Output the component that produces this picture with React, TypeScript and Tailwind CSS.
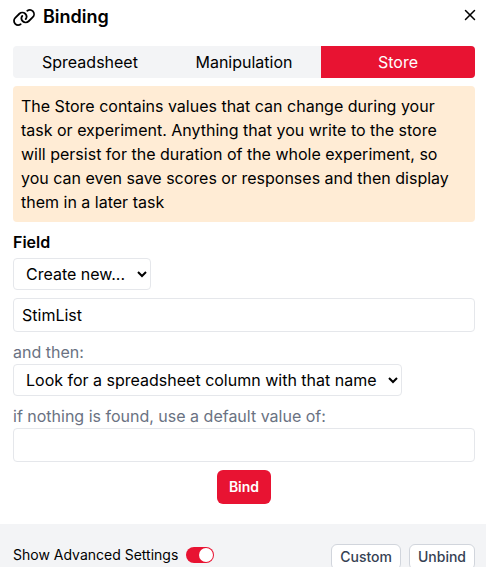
import React, { useState } from 'react';
import { X } from 'lucide-react';
import clsx from 'clsx';

const TABS = ['Spreadsheet', 'Manipulation', 'Store'];

const LinkIcon = () => (
  <svg
    viewBox="30 0 580 512"
    className="w-[22px] h-[19px]"
    fill="none"
    stroke="currentColor"
    strokeWidth={48}
    strokeLinecap="round"
    aria-hidden="true"
  >
    <path d="M410 75C456 42 517.500 46.500 557 86c44 44 44 115 0 159L445 357c-44 44-115 44-159 0C247 318 242 256 274 212" />
    <path d="M230 437C184 470 122.500 465.500 83 426c-44-44-44-115 0-159L195 155c44-44 115-44 159 0C393 194 398 256 366 300" />
  </svg>
);

export default function App() {
  const [tab, setTab] = useState('Store');
  const [field, setField] = useState('StimList');
  const [fallback, setFallback] = useState('');
  const [advanced, setAdvanced] = useState(true);

  return (
    <div className="h-screen overflow-hidden flex flex-col bg-white text-black font-['Inter',sans-serif]">
      <main className="pl-[13px] pr-[11px] pb-5">
        <header className="flex items-center justify-between h-[34px]">
          <h1 className="flex items-center gap-2 text-lg font-semibold">
            <LinkIcon />
            Binding
          </h1>
          <button aria-label="Close" className="-mr-1 -mt-1">
            <X size={18} strokeWidth={2} />
          </button>
        </header>

        <div role="tablist" className="mt-3 grid grid-cols-3 h-8 rounded overflow-hidden bg-gray-100">
          {TABS.map((name) => (
            <button
              key={name}
              role="tab"
              aria-selected={tab === name}
              onClick={() => setTab(name)}
              className={clsx(tab === name && 'bg-[#e81332] text-white')}
            >
              {name}
            </button>
          ))}
        </div>

        <p className="mt-2 py-2 pl-2 pr-3 rounded bg-[#ffecd5]">
          The Store contains values that can change during your task or experiment. Anything that you write to the
          store will persist for the duration of the whole experiment, so you can even save scores or responses and
          then display them in a later task
        </p>

        <div className="mt-2 flex flex-col items-start">
          <label htmlFor="source" className="mb-1 font-semibold">
            Field
          </label>
          <select id="source" className="h-8 px-2 rounded border border-gray-200 bg-white">
            <option>Create new...</option>
          </select>
          <input
            aria-label="Field name"
            value={field}
            onChange={(e) => setField(e.target.value)}
            className="mt-2 w-full h-[34px] px-2 rounded border border-gray-200"
          />
          <label htmlFor="then" className="mt-2 text-gray-500">
            and then:
          </label>
          <select id="then" className="h-8 px-2 rounded border border-gray-200 bg-white">
            <option>Look for a spreadsheet column with that name</option>
          </select>
          <label htmlFor="fallback" className="mt-2 text-gray-500">
            if nothing is found, use a default value of:
          </label>
          <input
            id="fallback"
            value={fallback}
            onChange={(e) => setFallback(e.target.value)}
            className="w-full h-[34px] px-2 rounded border border-gray-200"
          />
          <button className="mt-2 self-center h-[34px] px-3 rounded-md bg-[#e81332] text-sm font-semibold text-white">
            Bind
          </button>
        </div>
      </main>

      <footer className="flex-1 flex items-start justify-between bg-gray-100 pl-[13px] pr-[11px] pt-5">
        <label className="flex items-center gap-2 h-5.5 text-sm">
          Show Advanced Settings
          <input
            type="checkbox"
            role="switch"
            checked={advanced}
            onChange={(e) => setAdvanced(e.target.checked)}
            className="appearance-none flex items-center w-7 h-4 px-px rounded-full bg-gray-300 checked:bg-[#e81332] before:size-3.5 before:rounded-full before:bg-white checked:before:translate-x-3"
          />
        </label>
        <div className="flex gap-2">
          <button className="h-[26px] px-2 shrink-0 rounded-md border border-gray-300 bg-white text-sm font-medium text-gray-700">
            Custom
          </button>
          <button className="h-[26px] px-2 shrink-0 rounded-md border border-gray-300 bg-white text-sm font-medium text-gray-700">
            Unbind
          </button>
        </div>
      </footer>
    </div>
  );
}
